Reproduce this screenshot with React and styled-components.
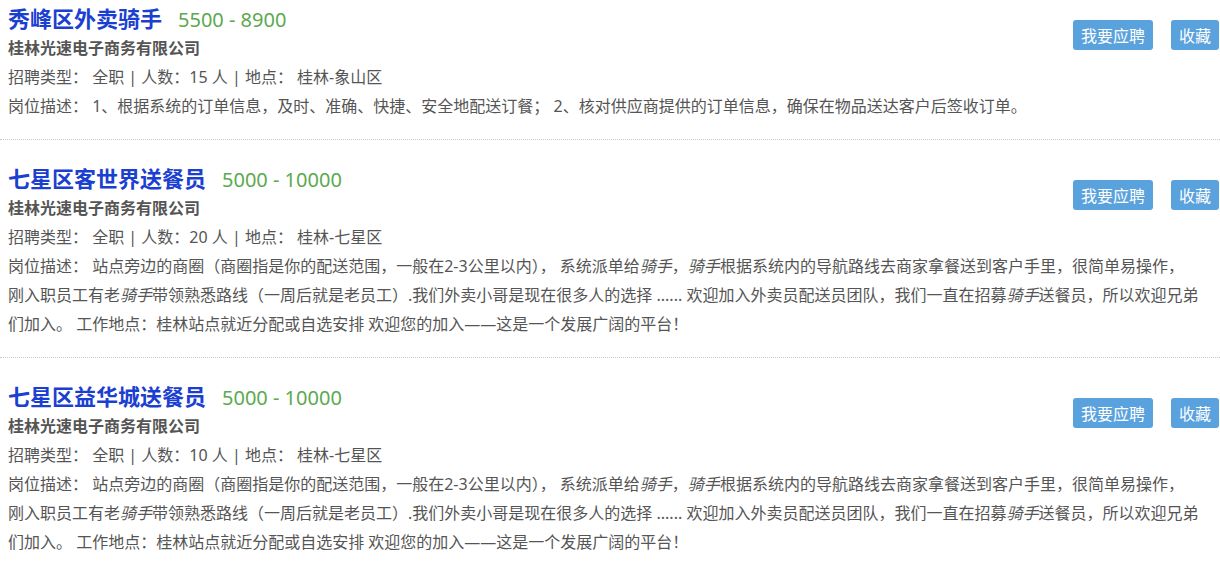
import React from "react";
import styled, { createGlobalStyle } from "styled-components";

const GlobalStyle = createGlobalStyle`
  html, body {
    margin: 0;
    padding: 0;
    background: #fff;
    overflow: hidden;
  }
  body {
    font-family: "Noto Sans", "Noto Sans CJK SC", sans-serif;
    color: #555;
  }
`;

const List = styled.ul`
  list-style: none;
  margin: -20px 0 0;
  padding: 0;
  width: 1220px;
`;

const Item = styled.li`
  padding: 22px 1px 18px 8px;
  border-bottom: 1px dotted #c8c8c8;
`;

const Head = styled.div`
  display: flex;
  justify-content: space-between;
  align-items: flex-start;
`;

const TitleRow = styled.div`
  display: flex;
  align-items: baseline;
  gap: 16px;
  height: 30px;
  line-height: 30px;
`;

const JobName = styled.a`
  font-size: 22px;
  font-weight: 700;
  color: #1b3fd0;
  text-decoration: none;
  font-family: "Noto Sans CJK SC", sans-serif;
`;

const Salary = styled.span`
  font-size: 20px;
  color: #5ca94f;
`;

const Company = styled.div`
  font-size: 16px;
  font-weight: 700;
  line-height: 30px;
  color: #555;
  font-family: "Noto Sans CJK SC", sans-serif;
`;

const Actions = styled.div`
  display: flex;
  gap: 18px;
  margin-top: 18px;
`;

const Button = styled.button`
  border: none;
  border-radius: 3px;
  background: #5aa2dd;
  color: #fff;
  font-family: "Noto Sans CJK SC", sans-serif;
  font-size: 16px;
  line-height: 30px;
  height: 30px;
  padding: 0 8px;
  cursor: pointer;
`;

const Info = styled.div`
  font-size: 16px;
  line-height: 30px;
`;

const Desc = styled.div`
  font-size: 16px;
  line-height: 29px;

  em {
    font-style: italic;
  }
`;

const longDesc = (
  <>
    站点旁边的商圈（商圈指是你的配送范围，一般在2-3公里以内），{" "}
    系统派单给<em>骑手</em>，<em>骑手</em>根据系统内的导航路线去商家拿餐送到客户手里，很简单易操作，
    <br />
    刚入职员工有老<em>骑手</em>带领熟悉路线（一周后就是老员工）.我们外卖小哥是现在很多人的选择{" "}
    ...... 欢迎加入外卖员配送员团队，我们一直在招募<em>骑手</em>送餐员，所以欢迎兄弟
    <br />
    们加入。 工作地点：桂林站点就近分配或自选安排 欢迎您的加入——这是一个发展广阔的平台！
  </>
);

const jobs = [
  {
    name: "秀峰区外卖骑手",
    salary: "5500 - 8900",
    count: 15,
    place: "桂林-象山区",
    desc: "1、根据系统的订单信息，及时、准确、快捷、安全地配送订餐； 2、核对供应商提供的订单信息，确保在物品送达客户后签收订单。",
  },
  { name: "七星区客世界送餐员", salary: "5000 - 10000", count: 20, place: "桂林-七星区", desc: longDesc },
  { name: "七星区益华城送餐员", salary: "5000 - 10000", count: 10, place: "桂林-七星区", desc: longDesc },
];

const JobItem = ({ job }) => (
  <Item>
    <Head>
      <div>
        <TitleRow>
          <JobName href="#">{job.name}</JobName>
          <Salary>{job.salary}</Salary>
        </TitleRow>
        <Company>桂林光速电子商务有限公司</Company>
      </div>
      <Actions>
        <Button>我要应聘</Button>
        <Button>收藏</Button>
      </Actions>
    </Head>
    <Info>
      招聘类型： 全职 | 人数：{job.count} 人 | 地点： {job.place}
    </Info>
    <Desc>岗位描述： {job.desc}</Desc>
  </Item>
);

export default function App() {
  return (
    <>
      <GlobalStyle />
      <List>
        {jobs.map((job) => (
          <JobItem key={job.name} job={job} />
        ))}
      </List>
    </>
  );
}
